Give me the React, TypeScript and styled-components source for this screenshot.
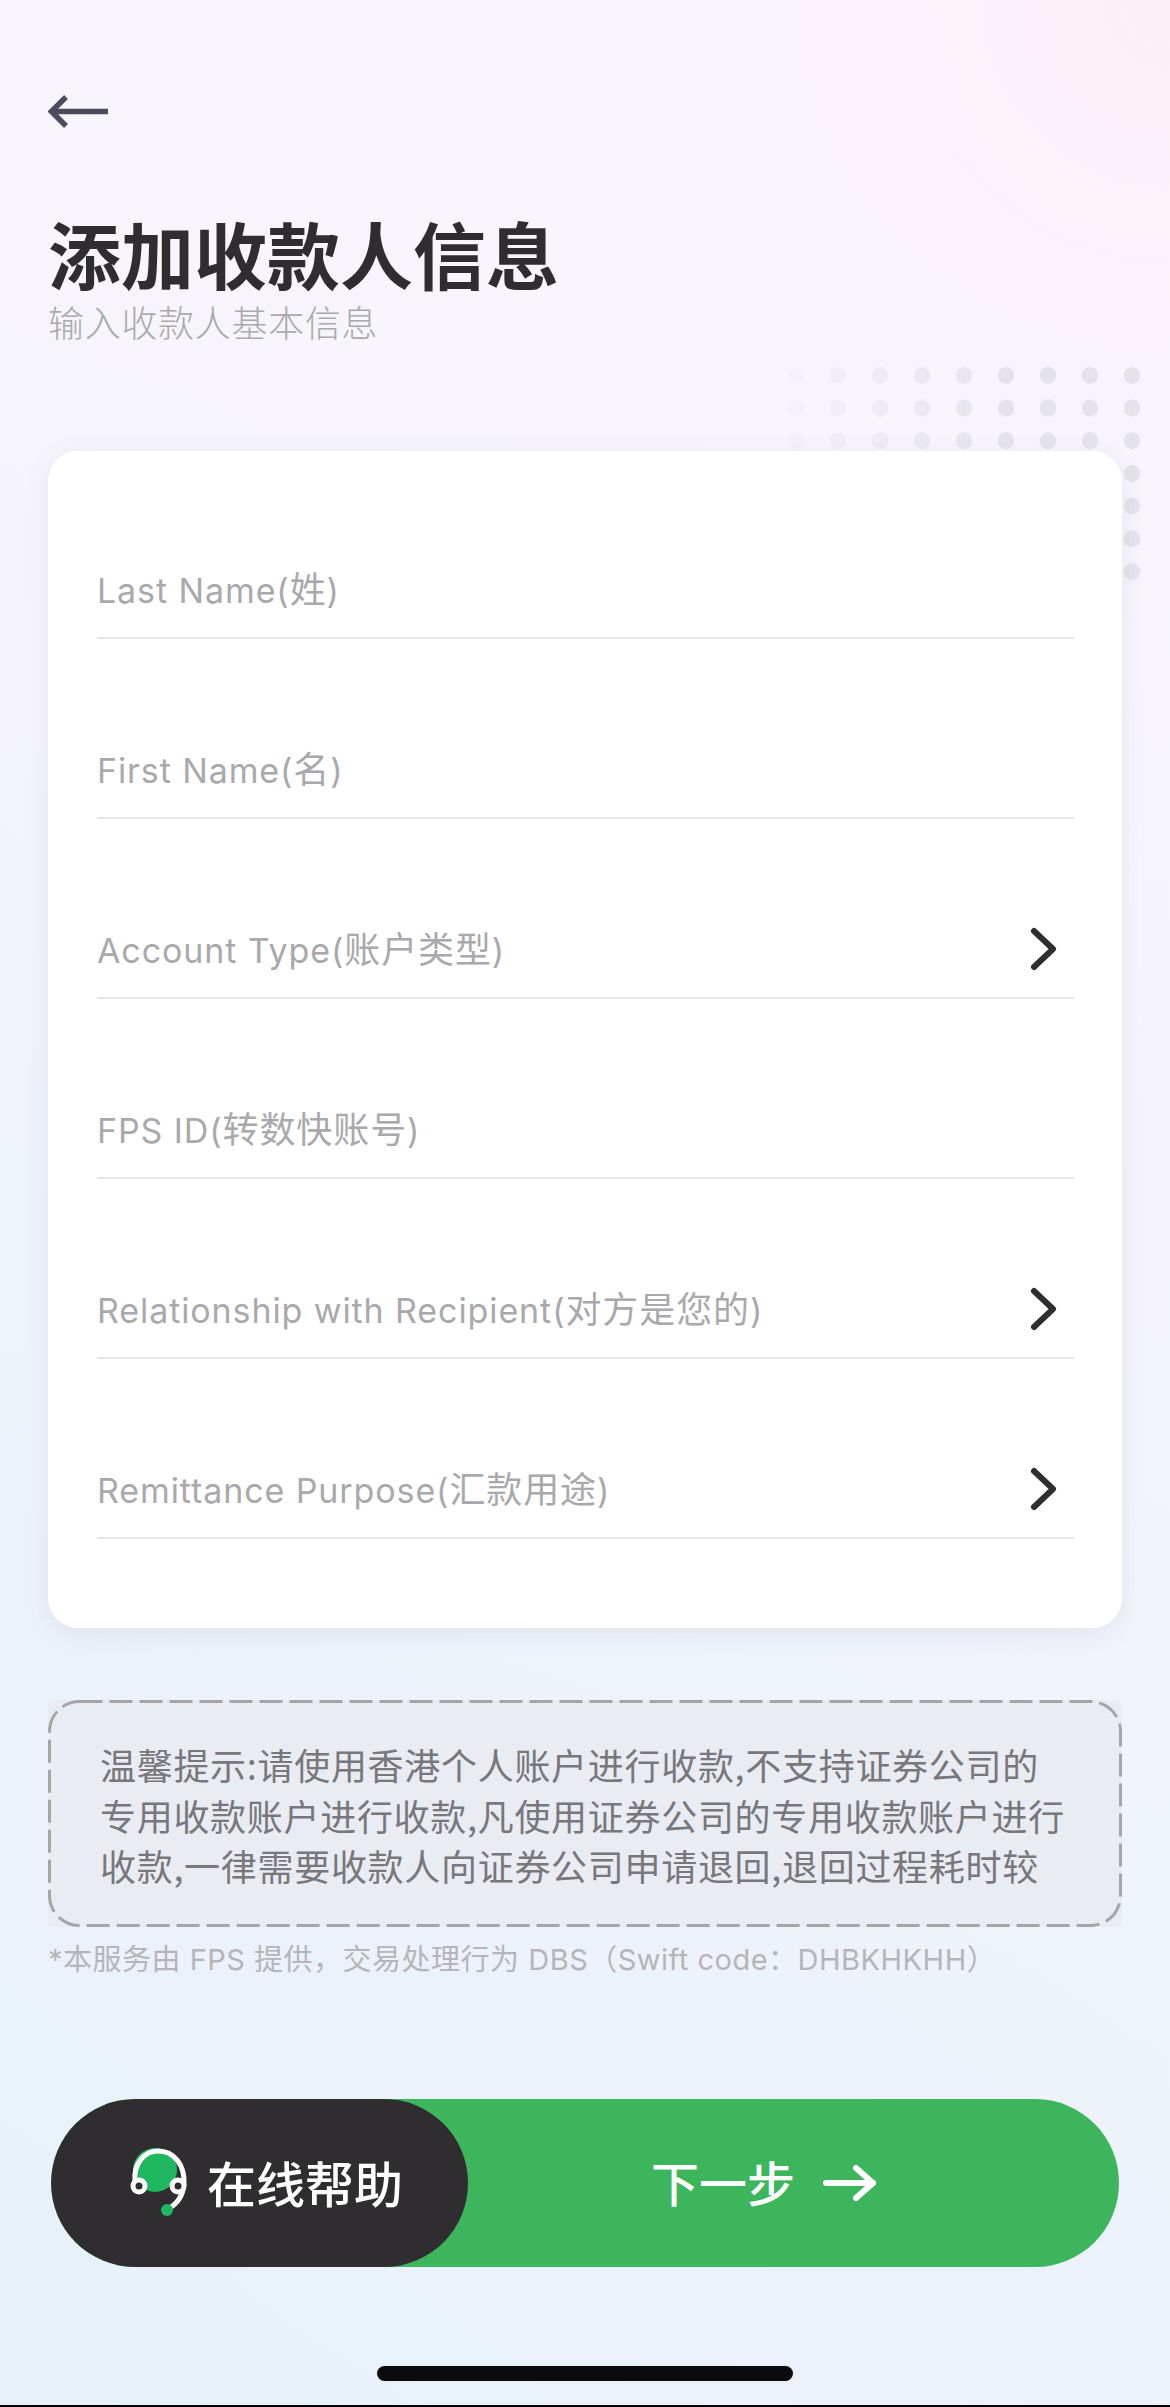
import React from "react";
import styled, { createGlobalStyle } from "styled-components";

const GlobalStyle = createGlobalStyle`
  html, body { margin: 0; padding: 0; }
  body { font-family: "Inter", "Noto Sans CJK SC", sans-serif; }
  * { box-sizing: border-box; }
`;

const Page = styled.div`
  position: relative;
  width: 1170px;
  height: 2407px;
  overflow: hidden;
  display: flex;
  flex-direction: column;
  padding: 95px 48px 0;
  background:
    radial-gradient(circle at 100% 0%, #fdeff8 0, rgba(253, 239, 248, 0) 480px),
    linear-gradient(200deg, #f9f5fc 0%, #f6f4fb 35%, #f2f4fb 70%, #f1f3fb 100%),
    #f3f4fb;
  &::before {
    content: "";
    position: absolute;
    inset: 0;
    background: linear-gradient(35deg, rgba(228, 240, 249, 0.75) 0%, rgba(228, 240, 249, 0) 55%);
  }
  & > * { position: relative; }
`;

const Dots = styled.div`
  && { position: absolute; }
  left: 775px;
  top: 359px;
  width: 378px;
  height: 229px;
  background-image: radial-gradient(circle at 21px 16.35px, #e5e3ea 8px, transparent 8.6px);
  background-size: 42px 32.7px;
  -webkit-mask-image: linear-gradient(90deg, rgba(0, 0, 0, 0.1) 0%, rgba(0, 0, 0, 1) 60%);
  mask-image: linear-gradient(90deg, rgba(0, 0, 0, 0.1) 0%, rgba(0, 0, 0, 1) 60%);
`;

const BackButton = styled.button`
  display: block;
  width: 60px;
  height: 33px;
  padding: 0;
  border: 0;
  background: none;
  color: #4a4b5c;
  svg { display: block; }
`;

const Title = styled.h1`
  margin: 84px 0 0;
  font-size: 73px;
  line-height: 80px;
  font-weight: 700;
  color: #2f2d30;
  font-family: "Noto Sans CJK SC", sans-serif;
`;

const Subtitle = styled.p`
  margin: 7px 0 0;
  font-size: 36px;
  line-height: 44px;
  letter-spacing: 0.7px;
  font-weight: 300;
  color: #a9a9ae;
  font-family: "Noto Sans CJK SC", sans-serif;
`;

const Card = styled.section`
  margin-top: 108px;
  height: 1177px;
  padding: 8px 48px 0 49px;
  background: #fff;
  border-radius: 30px;
  box-shadow: 0 6px 26px rgba(90, 100, 150, 0.1);
`;

const Row = styled.div`
  display: flex;
  align-items: center;
  justify-content: space-between;
  height: 180px;
  padding: 81px 0 0;
  border-bottom: 2px solid #e5e5e6;
`;

const RowLabel = styled.span`
  font-size: 34px;
  letter-spacing: 0.9px;
  line-height: 44px;
  font-weight: 400;
  color: #a9a9ad;
`;

const RowLabelCn = styled.span`
  font-size: 36px;
  font-weight: 400;
  font-family: "Noto Sans CJK SC", sans-serif;
`;

const Chevron = styled.svg`
  width: 30px;
  height: 46px;
  margin-right: 16px;
  flex: none;
`;

const Note = styled.div`
  margin-top: 72px;
  height: 227px;
  padding: 39px 52px 0;
  background: #e9ecf3;
  border-radius: 6px;
  overflow: hidden;
`;

const NoteOutline = styled.svg`
  position: absolute;
  inset: 0;
  width: 100%;
  height: 100%;
`;

const NoteLine = styled.div`
  font-size: 36px;
  line-height: 50.5px;
  letter-spacing: 0.7px;
  color: #77777c;
  font-weight: 400;
  white-space: nowrap;
  font-family: "Noto Sans CJK SC", sans-serif;
`;

const Footnote = styled.p`
  margin: 13px 0 0;
  font-size: 29px;
  line-height: 40px;
  letter-spacing: 0.5px;
  color: #b5b5b9;
  white-space: nowrap;
`;

const ActionBar = styled.div`
  display: flex;
  align-items: stretch;
  margin: 119px 3px 0;
  height: 168px;
  border-radius: 84px;
  background: #3db55c;
  overflow: hidden;
`;

const HelpButton = styled.button`
  display: flex;
  align-items: center;
  gap: 18px;
  width: 417px;
  padding: 0 0 4px 78px;
  border: 0;
  border-radius: 84px;
  background: #2f2d30;
  color: #fff;
  font: 500 49px "Noto Sans CJK SC", sans-serif;
`;

const NextButton = styled.button`
  flex: 1;
  display: flex;
  align-items: center;
  gap: 28px;
  padding: 0 0 4px 183px;
  border: 0;
  background: none;
  color: #fff;
  font: 500 48px "Noto Sans CJK SC", sans-serif;
  svg { margin-top: 4px; }
`;

const HomeIndicator = styled.div`
  align-self: center;
  margin-top: 99px;
  width: 416px;
  height: 15px;
  border-radius: 8px;
  background: #0b0b0d;
`;

const BottomEdge = styled.div`
  && { position: absolute; }
  left: 0;
  right: 0;
  bottom: 0;
  height: 2px;
  background: #000;
`;

const fields = [
  { en: "Last Name(", cn: "姓", arrow: false },
  { en: "First Name(", cn: "名", arrow: false },
  { en: "Account Type(", cn: "账户类型", arrow: true },
  { en: "FPS ID(", cn: "转数快账号", arrow: false },
  { en: "Relationship with Recipient(", cn: "对方是您的", arrow: true },
  { en: "Remittance Purpose(", cn: "汇款用途", arrow: true },
];

const noteLines = [
  "温馨提示:请使用香港个人账户进行收款,不支持证券公司的",
  "专用收款账户进行收款,凡使用证券公司的专用收款账户进行",
  "收款,一律需要收款人向证券公司申请退回,退回过程耗时较",
];

export default function App() {
  return (
    <Page>
      <GlobalStyle />
      <Dots />
      <BackButton aria-label="返回">
        <svg width="60" height="33" viewBox="0 0 60 33" fill="none" stroke="currentColor" strokeWidth="5.5">
          <path d="M60 16.5H4" />
          <path d="M18 2 3.5 16.5 18 31" />
        </svg>
      </BackButton>
      <Title>添加收款人信息</Title>
      <Subtitle>输入收款人基本信息</Subtitle>
      <Card>
        {fields.map((f) => (
          <Row key={f.en}>
            <RowLabel>
              {f.en}
              <RowLabelCn>{f.cn}</RowLabelCn>)
            </RowLabel>
            {f.arrow && (
              <Chevron viewBox="0 0 30 46" fill="none" stroke="#2f2d30" strokeWidth="6" strokeLinecap="round" strokeLinejoin="round">
                <path d="M6 5 25 23 6 41" />
              </Chevron>
            )}
          </Row>
        ))}
      </Card>
      <Note>
        {noteLines.map((l) => (
          <NoteLine key={l}>{l}</NoteLine>
        ))}
        <NoteOutline fill="none">
          <rect x="1.5" y="1.5" width="1071" height="224" rx="30" stroke="#a4a4a9" strokeWidth="3" strokeDasharray="23 7" />
        </NoteOutline>
      </Note>
      <Footnote>*本服务由 FPS 提供，交易处理行为 DBS（Swift code：DHBKHKHH）</Footnote>
      <ActionBar>
        <HelpButton>
          <svg width="60" height="70" viewBox="0 0 60 70" fill="none">
            <circle cx="26" cy="24" r="22" fill="#1fb75f" />
            <path d="M6 36C4 17 16 5 29 5 45 5 56 19 55 38 54 50 48 58 39 63" stroke="#fff" strokeWidth="5" strokeLinecap="round" />
            <circle cx="10" cy="40" r="6" fill="#2f2d30" stroke="#fff" strokeWidth="5" />
            <circle cx="49" cy="40" r="6" fill="#2f2d30" stroke="#fff" strokeWidth="5" />
            <circle cx="38" cy="64" r="6" fill="#1fb75f" />
          </svg>
          在线帮助
        </HelpButton>
        <NextButton>
          下一步
          <svg width="54" height="36" viewBox="0 0 54 36" fill="none" stroke="#fff" strokeWidth="6" strokeLinecap="round" strokeLinejoin="round">
            <path d="M3 18H50" />
            <path d="M33 3 50 18 33 33" />
          </svg>
        </NextButton>
      </ActionBar>
      <HomeIndicator />
      <BottomEdge />
    </Page>
  );
}
